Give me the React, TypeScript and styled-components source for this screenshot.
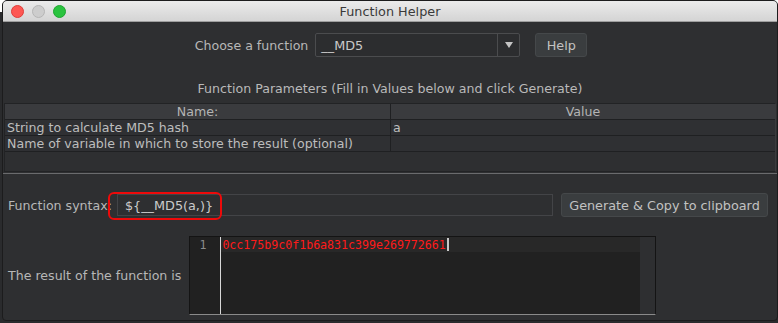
import React from 'react';
import styled, { createGlobalStyle } from 'styled-components';

const GlobalStyle = createGlobalStyle`
  html, body {
    margin: 0;
    padding: 0;
  }
  body {
    width: 778px;
    height: 323px;
    overflow: hidden;
    background: linear-gradient(#ffffff 0, #ffffff 12px, #2a2b2d 12px);
    font-family: 'DejaVu Sans', 'Noto Sans', sans-serif;
    font-size: 12.6px;
  }
`;

const Window = styled.div`
  margin-left: 2px;
  width: 774px;
  height: 319px;
  border: 1px solid #1c1c1d;
  border-radius: 5px 5px 4px 4px;
  overflow: hidden;
  display: flex;
  flex-direction: column;
  background: #2e2f31;
`;

const TitleBar = styled.div`
  height: 20px;
  flex: none;
  display: flex;
  align-items: center;
  position: relative;
  padding-left: 8px;
  gap: 8px;
  background: linear-gradient(#ebebeb, #d4d4d4);
  border-bottom: 1px solid #9e9e9e;
`;

const Light = styled.span<{ $color: string; $edge: string }>`
  width: 11px;
  height: 11px;
  border-radius: 50%;
  background: ${p => p.$color};
  border: 0.5px solid ${p => p.$edge};
`;

const Title = styled.div`
  position: absolute;
  left: 0;
  right: 0;
  text-align: center;
  color: #3a3a3a;
  font-size: 12.8px;
  pointer-events: none;
`;

const Body = styled.div`
  flex: 1;
  display: flex;
  flex-direction: column;
  padding: 0 1px;
  color: #b9b9b9;
`;

const TopRow = styled.div`
  display: flex;
  align-items: center;
  justify-content: center;
  padding: 11px 0 0 2px;
  gap: 7px;
`;

const Label = styled.span`
  color: #b7b7b7;
  white-space: nowrap;
`;

const Combo = styled.div`
  width: 203px;
  height: 22px;
  border: 1px solid #4b4c4e;
  border-radius: 2px;
  background: #2c2d2f;
  display: flex;
  align-items: stretch;
  margin-right: 8px;
`;

const ComboText = styled.span`
  flex: 1;
  padding-left: 5px;
  display: flex;
  align-items: center;
  color: #c9c9c9;
  font-size: 12.8px;
`;

const ComboArrow = styled.span`
  width: 21px;
  border-left: 1px solid #4b4c4e;
  display: flex;
  align-items: center;
  justify-content: center;
  &::after {
    content: '';
    border-left: 4px solid transparent;
    border-right: 4px solid transparent;
    border-top: 6px solid #c4c4c4;
  }
`;

const Button = styled.button<{ $width: number }>`
  flex: none;
  width: ${p => p.$width}px;
  height: 24px;
  border: 1px solid #45484a;
  border-radius: 3px;
  background: #3a3d3f;
  color: #c2c2c2;
  font-family: inherit;
  font-size: 12.8px;
  padding: 0;
`;

const SectionTitle = styled.div`
  text-align: center;
  margin-top: 24px;
  line-height: 16px;
  height: 18px;
  color: #b9b9b9;
`;

const Table = styled.div`
  margin-top: 4px;
  height: 67px;
  border: 1px solid #222325;
  border-right-color: #3a3b3d;
  display: flex;
  flex-direction: column;
`;

const Row = styled.div<{ $head?: boolean }>`
  display: grid;
  grid-template-columns: 385px 1fr;
  height: 15px;
  background: ${p => (p.$head ? '#3a3b3e' : '#2f3033')};
  border-bottom: 1px solid #1f2022;
`;

const Cell = styled.div<{ $head?: boolean }>`
  padding-left: ${p => (p.$head ? 0 : 2)}px;
  text-align: ${p => (p.$head ? 'center' : 'left')};
  line-height: 15px;
  color: ${p => (p.$head ? '#b4b4b4' : '#bdbdbd')};
  white-space: nowrap;
  overflow: hidden;
  & + & {
    border-left: 1px solid ${p => (p.$head ? '#4c4d50' : '#1f2022')};
  }
`;

const Divider = styled.div`
  height: 1px;
  margin: 1px -1px 0;
  background: #6a6b6d;
`;

const SyntaxRow = styled.div`
  display: flex;
  align-items: center;
  margin-top: 19px;
  padding: 0 8px 0 4px;
  position: relative;
`;

const Field = styled.div`
  flex: 1;
  margin-left: 5px;
  height: 20px;
  border: 1px solid #434447;
  background: #2e2f31;
  padding-left: 7px;
  display: flex;
  align-items: center;
  color: #cbcbcb;
  font-size: 12.8px;
  margin-right: 8px;
`;

const Highlight = styled.div`
  position: absolute;
  left: 104px;
  top: -1px;
  width: 110px;
  height: 24px;
  border: 2.5px solid #ee0a0a;
  border-radius: 6px;
  pointer-events: none;
`;

const ResultRow = styled.div`
  display: flex;
  align-items: center;
  margin-top: 19px;
  padding-left: 4px;
`;

const Editor = styled.div`
  margin-left: 8px;
  width: 465px;
  height: 77px;
  border: 1px solid #141414;
  border-bottom: 1px solid #8a8a8a;
  background: #212121;
  display: flex;
`;

const Gutter = styled.div`
  width: 31px;
  border-right: 1px solid #d8d8d8;
  text-align: right;
  padding-right: 14px;
  box-sizing: border-box;
  font-family: 'DejaVu Sans Mono', monospace;
  font-size: 11.6px;
  line-height: 16px;
  color: #8c8c8c;
`;

const Lines = styled.div`
  flex: 1;
  display: flex;
  flex-direction: column;
`;

const CurrentLine = styled.div`
  height: 15px;
  background: #282828;
  display: flex;
  align-items: center;
  font-family: 'DejaVu Sans Mono', monospace;
  font-size: 11.6px;
  color: #ff1a1a;
  padding-left: 1px;
`;

const Caret = styled.span`
  width: 2px;
  height: 13px;
  background: #c8c8c8;
  margin-left: 1px;
`;

const Scrollbar = styled.div`
  width: 15px;
  background: #2e2f31;
`;

export default function App() {
  return (
    <>
      <GlobalStyle />
      <Window>
        <TitleBar>
          <Light $color="#fd5753" $edge="#df3d39" />
          <Light $color="#cdcdcd" $edge="#b5b5b5" />
          <Light $color="#2ac33f" $edge="#1ea531" />
          <Title>Function Helper</Title>
        </TitleBar>
        <Body>
          <TopRow>
            <Label>Choose a function</Label>
            <Combo>
              <ComboText>__MD5</ComboText>
              <ComboArrow />
            </Combo>
            <Button $width={52}>Help</Button>
          </TopRow>
          <SectionTitle>Function Parameters (Fill in Values below and click Generate)</SectionTitle>
          <Table>
            <Row $head>
              <Cell $head>Name:</Cell>
              <Cell $head>Value</Cell>
            </Row>
            <Row>
              <Cell>String to calculate MD5 hash</Cell>
              <Cell>a</Cell>
            </Row>
            <Row>
              <Cell>Name of variable in which to store the result (optional)</Cell>
              <Cell></Cell>
            </Row>
          </Table>
          <Divider />
          <SyntaxRow>
            <Label>Function syntax:</Label>
            <Field>{'${__MD5(a,)}'}</Field>
            <Button $width={207}>Generate &amp; Copy to clipboard</Button>
            <Highlight />
          </SyntaxRow>
          <ResultRow>
            <Label>The result of the function is</Label>
            <Editor>
              <Gutter>1</Gutter>
              <Lines>
                <CurrentLine>
                  0cc175b9c0f1b6a831c399e269772661
                  <Caret />
                </CurrentLine>
              </Lines>
              <Scrollbar />
            </Editor>
          </ResultRow>
        </Body>
      </Window>
    </>
  );
}
